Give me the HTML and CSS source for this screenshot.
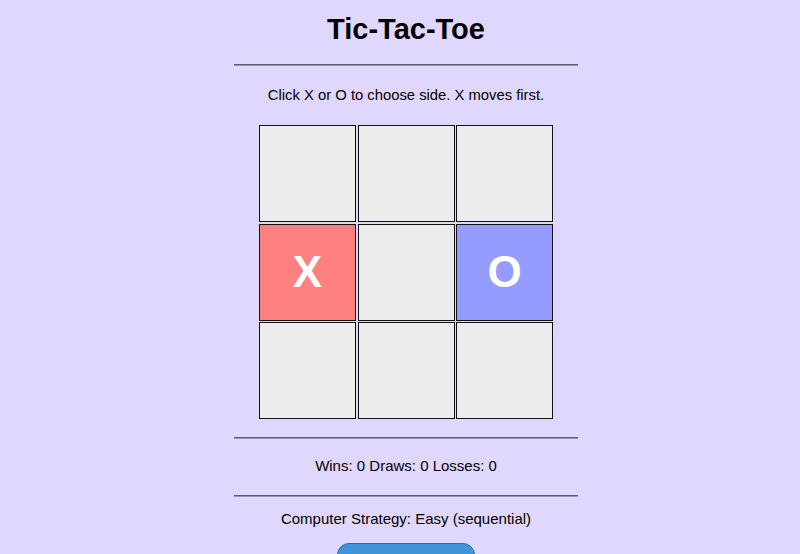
FILE: index.html
```html
<!DOCTYPE html>
<html>
<head>
<meta charset="utf-8">
<link rel="stylesheet" href="styles.css">
</head>
<body>
<div class="game">
  <h1 class="title">Tic-Tac-Toe</h1>
  <hr class="rule">
  <p class="hint">Click X or O to choose side. X moves first.</p>
  <div class="board">
    <button class="cell"></button>
    <button class="cell"></button>
    <button class="cell"></button>
    <button class="cell cell-x">X</button>
    <button class="cell"></button>
    <button class="cell cell-o">O</button>
    <button class="cell"></button>
    <button class="cell"></button>
    <button class="cell"></button>
  </div>
  <hr class="rule">
  <p class="score">Wins: 0 Draws: 0 Losses: 0</p>
  <hr class="rule">
  <p class="strategy">Computer Strategy: Easy (sequential)</p>
  <button class="new-game">New Game</button>
</div>
</body>
</html>
```
FILE: styles.css
```css
html, body {
  margin: 0;
  background: #e0d7ff;
}
body {
  padding-left: 12px;
  font-family: "Liberation Sans", Arial, sans-serif;
  color: #000;
}
.game {
  width: 344px;
  margin: 0 auto;
  display: flex;
  flex-direction: column;
  align-items: center;
  text-align: center;
}
.title {
  font-size: 29px;
  font-weight: bold;
  margin: 12px 0 0;
  line-height: 34px;
}
.rule {
  align-self: stretch;
  border: none;
  border-top: 1px solid #5e5a6e;
  border-bottom: 1px solid #9a96ab;
  margin: 18px 0 0;
  height: 0;
}
.hint {
  font-size: 14.8px;
  margin: 20px 0 0;
  line-height: 18px;
}
.board {
  margin-top: 21px;
  display: grid;
  grid-template-columns: repeat(3, 97px);
  grid-template-rows: repeat(3, 97px);
  gap: 1.5px;
}
.cell {
  box-sizing: border-box;
  width: 97px;
  height: 97px;
  margin: 0;
  padding: 0;
  border: 1px solid #111;
  background: #ececec;
  font-family: "Liberation Sans", Arial, sans-serif;
  font-size: 44px;
  font-weight: bold;
  color: #fff;
}
.cell-x { background: #ff8080; }
.cell-o { background: #949cff; }
.board + .rule { margin-top: 18px; }
.score {
  font-size: 15px;
  margin: 18px 0 0;
  line-height: 18px;
}
.score + .rule { margin-top: 20px; }
.strategy {
  font-size: 15px;
  margin: 13px 0 0;
  line-height: 18px;
}
.new-game {
  box-sizing: border-box;
  margin-top: 15px;
  width: 138px;
  height: 60px;
  padding: 22px 0 0;
  background: #3d94d8;
  border: 1px solid #2b6ea6;
  border-radius: 12px;
  color: #fff;
  font-family: "Liberation Sans", Arial, sans-serif;
  font-size: 16px;
  line-height: 20px;
}
```
